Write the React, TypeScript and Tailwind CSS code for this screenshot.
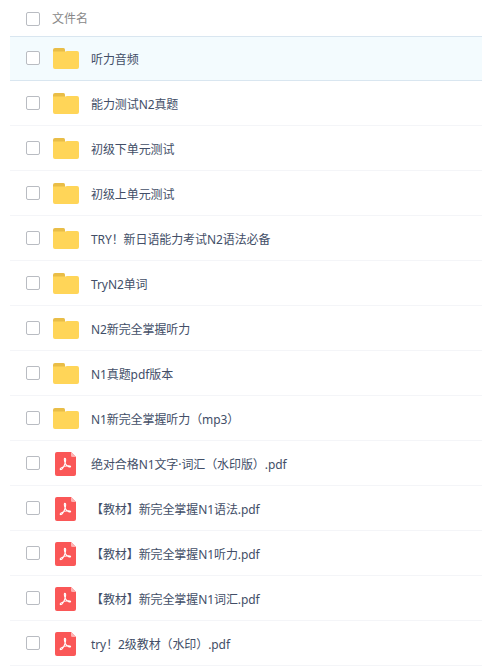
import clsx from "clsx";

interface FileItem {
  name: string;
  type: "folder" | "pdf";
  active?: boolean;
}

const files: FileItem[] = [
  { name: "听力音频", type: "folder", active: true },
  { name: "能力测试N2真题", type: "folder" },
  { name: "初级下单元测试", type: "folder" },
  { name: "初级上单元测试", type: "folder" },
  { name: "TRY！新日语能力考试N2语法必备", type: "folder" },
  { name: "TryN2单词", type: "folder" },
  { name: "N2新完全掌握听力", type: "folder" },
  { name: "N1真题pdf版本", type: "folder" },
  { name: "N1新完全掌握听力（mp3）", type: "folder" },
  { name: "绝对合格N1文字·词汇（水印版）.pdf", type: "pdf" },
  { name: "【教材】新完全掌握N1语法.pdf", type: "pdf" },
  { name: "【教材】新完全掌握N1听力.pdf", type: "pdf" },
  { name: "【教材】新完全掌握N1词汇.pdf", type: "pdf" },
  { name: "try！2级教材（水印）.pdf", type: "pdf" },
];

function Checkbox() {
  return <span className="block h-3.5 w-3.5 shrink-0 rounded-[2px] border border-[#b9bcc2] bg-white" />;
}

function FolderIcon() {
  return (
    <svg width="26" height="21" viewBox="0 0 26 21" className="block">
      <path d="M0 2a2 2 0 0 1 2-2h8.500a1.500 1.500 0 0 1 1.500 1.500V6H0z" fill="#e9bd47" />
      <path d="M0 3.500h12.500L14 3h10a2 2 0 0 1 2 2v14a2 2 0 0 1-2 2H2a2 2 0 0 1-2-2z" fill="#ffd558" />
    </svg>
  );
}

function PdfIcon() {
  return (
    <svg width="21" height="24" viewBox="0 0 21 24" className="block">
      <path d="M2 0h14l5 5v17a2 2 0 0 1-2 2H2a2 2 0 0 1-2-2V2a2 2 0 0 1 2-2z" fill="#fa5757" />
      <path d="M16 0l5 5h-3.500A1.500 1.500 0 0 1 16 3.500z" fill="#fdb3b3" />
      <path
        d="M9.800 6.300c1.300 0 .9 2.900.3 4.800-.8 2.500-2.600 5.900-3.900 6.400-1 .4-1.400-.6-.4-1.400 1.800-1.400 5.500-2.500 7.900-2.400 1.800.1 2.200.8 1.600 1.200-.7.600-3.200-.6-4.300-2.300-1.200-1.700-2.300-6.300-1.200-6.300z"
        fill="none"
        stroke="#fff"
        strokeWidth="1.1"
        strokeLinejoin="round"
      />
    </svg>
  );
}

function FileRow({ file }: { file: FileItem }) {
  return (
    <li
      className={clsx(
        "flex h-[45px] items-center border-b pl-4",
        file.active ? "border-t border-[#d9e6f0] bg-[#f3fbfe] pb-px" : "border-[#f4f5f8]"
      )}
    >
      <Checkbox />
      <span className="ml-3 flex w-[28px] shrink-0">
        {file.type === "folder" ? (
          <span className="ml-px">
            <FolderIcon />
          </span>
        ) : (
          <span className="ml-[3px] pt-0.5">
            <PdfIcon />
          </span>
        )}
      </span>
      <span className="ml-[11px] pt-[3px] text-xs tracking-[-0.09px] whitespace-nowrap text-[#424e67]">
        {file.name}
      </span>
    </li>
  );
}

export default function App() {
  return (
    <div className="h-[670px] w-[482px] overflow-hidden bg-white pl-2.5 font-['Noto_Sans','Noto_Sans_CJK_SC',sans-serif]">
      <div className="flex h-9 items-center pt-0.5 pl-4">
        <Checkbox />
        <span className="ml-3 text-xs text-[#888]">文件名</span>
      </div>
      <ul>
        {files.map((file) => (
          <FileRow key={file.name} file={file} />
        ))}
      </ul>
    </div>
  );
}
